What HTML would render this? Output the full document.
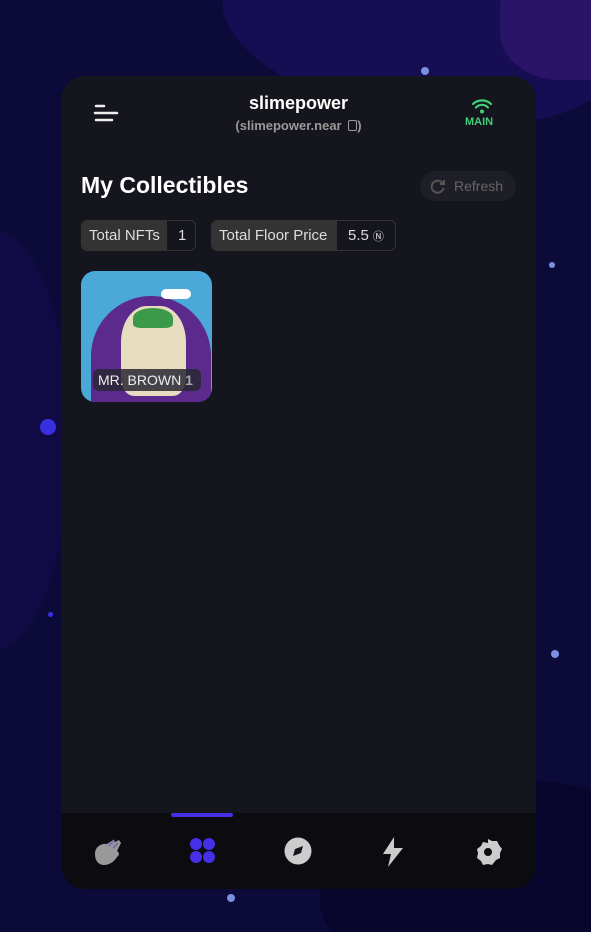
<!DOCTYPE html>
<html><head><style>
*{margin:0;padding:0;box-sizing:border-box}
html,body{width:591px;height:932px;overflow:hidden}
body{font-family:"Liberation Sans",sans-serif;position:relative;background:#0c0a38}
.bg{position:absolute;left:0;top:0;width:591px;height:932px;overflow:hidden}
.card{position:absolute;left:61px;top:76px;width:475px;height:813px;background:#14151d;border-radius:24px;overflow:hidden}
.dot{position:absolute;border-radius:50%;background:#7b8fe0}
.pill{position:absolute;top:144px;height:31px;border:1px solid #333;border-radius:6px;display:flex;overflow:hidden;font-size:15px;color:#ddd}
.pill span{display:flex;align-items:center;padding:0 7px}
.pill .l{background:#333}
</style></head><body>
<div class="bg">
<div style="position:absolute;left:220px;top:-60px;width:400px;height:180px;background:#170d52;border-radius:50%;transform:rotate(10deg)"></div>
<div style="position:absolute;left:500px;top:-40px;width:150px;height:120px;background:#2a1468;border-radius:40%"></div>
<div style="position:absolute;left:-80px;top:230px;width:150px;height:420px;background:#100b44;border-radius:50%"></div>
<div style="position:absolute;left:320px;top:780px;width:340px;height:200px;background:#08062c;border-radius:40%"></div>
<div class="dot" style="left:421px;top:67px;width:8px;height:8px"></div>
<div class="dot" style="left:549px;top:262px;width:6px;height:6px"></div>
<div class="dot" style="left:40px;top:419px;width:16px;height:16px;background:#3a2fe0"></div>
<div class="dot" style="left:48px;top:612px;width:5px;height:5px;background:#3a2fe0"></div>
<div class="dot" style="left:551px;top:650px;width:8px;height:8px"></div>
<div class="dot" style="left:227px;top:894px;width:8px;height:8px"></div>
</div>
<div class="card">
<svg style="position:absolute;left:32px;top:27px" width="26" height="20"><path d="M3 3h8M2 10h22M3 17h16" stroke="#eee" stroke-width="2.5" stroke-linecap="round"/></svg>
<div style="position:absolute;left:0;width:475px;top:17px;text-align:center;color:#fff;font-weight:bold;font-size:18px">slimepower</div>
<div style="position:absolute;left:0;width:475px;top:42px;text-align:center;color:#999;font-weight:bold;font-size:13px">(slimepower.near <span style="display:inline-block;width:9px;height:11px;border:1.5px solid #999;border-radius:2px;vertical-align:-1px;margin-left:3px"></span>)</div>
<svg style="position:absolute;left:410px;top:22px" width="22" height="16"><path d="M2 6a13 13 0 0 1 18 0M5 9.5a8 8 0 0 1 12 0" stroke="#3fcf78" stroke-width="2.2" fill="none" stroke-linecap="round"/><circle cx="11" cy="13.5" r="2" fill="#3fcf78"/></svg>
<div style="position:absolute;left:404px;top:40px;color:#3fcf78;font-weight:bold;font-size:11px">MAIN</div>
<div style="position:absolute;left:20px;top:96px;color:#fff;font-weight:bold;font-size:23px">My Collectibles</div>
<div style="position:absolute;left:359px;top:95px;width:96px;height:30px;border-radius:15px;background:#1d1e26;color:#666;font-size:14px;line-height:30px;padding-left:34px">Refresh</div>
<svg style="position:absolute;left:369px;top:102px" width="16" height="16"><path d="M13 6A6 6 0 1 0 13.5 10" stroke="#555" stroke-width="2" fill="none"/><path d="M14 2v4h-4" stroke="#555" stroke-width="2" fill="none"/></svg>
<div class="pill" style="left:20px;width:115px"><span class="l" style="width:85px">Total NFTs</span><span style="padding-left:11px">1</span></div>
<div class="pill" style="left:150px;width:185px"><span class="l" style="width:125px">Total Floor Price</span><span style="padding-left:11px">5.5 <small style="font-size:11px;margin-left:4px">Ⓝ</small></span></div>
<div style="position:absolute;left:20px;top:195px;width:131px;height:131px;border-radius:14px;overflow:hidden;background:#4aa9d8">
<div style="position:absolute;left:10px;top:25px;width:120px;height:140px;background:#5b2a8c;border-radius:60px 60px 0 0"></div>
<div style="position:absolute;left:40px;top:35px;width:65px;height:90px;background:#e8dcc0;border-radius:40% 40% 20% 20%"></div>
<div style="position:absolute;left:52px;top:37px;width:40px;height:20px;background:#3a9a4a;border-radius:50% 50% 20% 20%"></div>
<div style="position:absolute;left:80px;top:18px;width:30px;height:10px;background:#fff;border-radius:6px"></div>
<div style="position:absolute;left:12px;top:98px;width:108px;height:22px;background:rgba(40,40,50,.85);border-radius:6px;color:#eee;font-size:14px;line-height:22px;padding-left:5px">MR. BROWN <b style="color:#aaa">1</b></div>
</div>
<div style="position:absolute;left:0;top:737px;width:475px;height:76px;background:#0b0b10"></div>
<div style="position:absolute;left:110px;top:737px;width:62px;height:4px;background:#4530e8;border-radius:2px"></div>
<svg style="position:absolute;left:30px;top:760px" width="34" height="34"><path d="M4 18c0-7 6-11 12-10l6-4 2 2 4-2 2 3-4 8c2 1 3 4 0 6-3 5-8 8-13 8-6 0-9-5-9-11z" fill="#999"/><path d="M18 10l5-6M22 12l5-5" stroke="#7a6fb0" stroke-width="2"/></svg>
<svg style="position:absolute;left:128px;top:761px" width="28" height="28"><circle cx="7" cy="7" r="6" fill="#4530e8"/><circle cx="20" cy="7" r="6" fill="#4530e8"/><circle cx="7" cy="20" r="6" fill="#4530e8"/><circle cx="20" cy="20" r="6" fill="#4530e8"/></svg>
<svg style="position:absolute;left:223px;top:761px" width="28" height="28"><circle cx="14" cy="14" r="13.5" fill="#ccc"/><path d="M19 9l-8 3-2 7 8-3z" fill="#14151d"/></svg>
<svg style="position:absolute;left:320px;top:760px" width="24" height="32"><path d="M13 1L2 18h8l-3 13L22 12h-9z" fill="#ccc"/></svg>
<svg style="position:absolute;left:413px;top:762px" width="28" height="28"><path d="M14 1l4 2 5 0 2 4 3 4-2 4 0 5-4 2-4 5-4-1-5 1-2-4-4-3 1-5-1-4 4-3 2-4 5 1z" fill="#ccc"/><circle cx="14" cy="14" r="4" fill="#0b0b10"/></svg>
</div>
</body></html>
